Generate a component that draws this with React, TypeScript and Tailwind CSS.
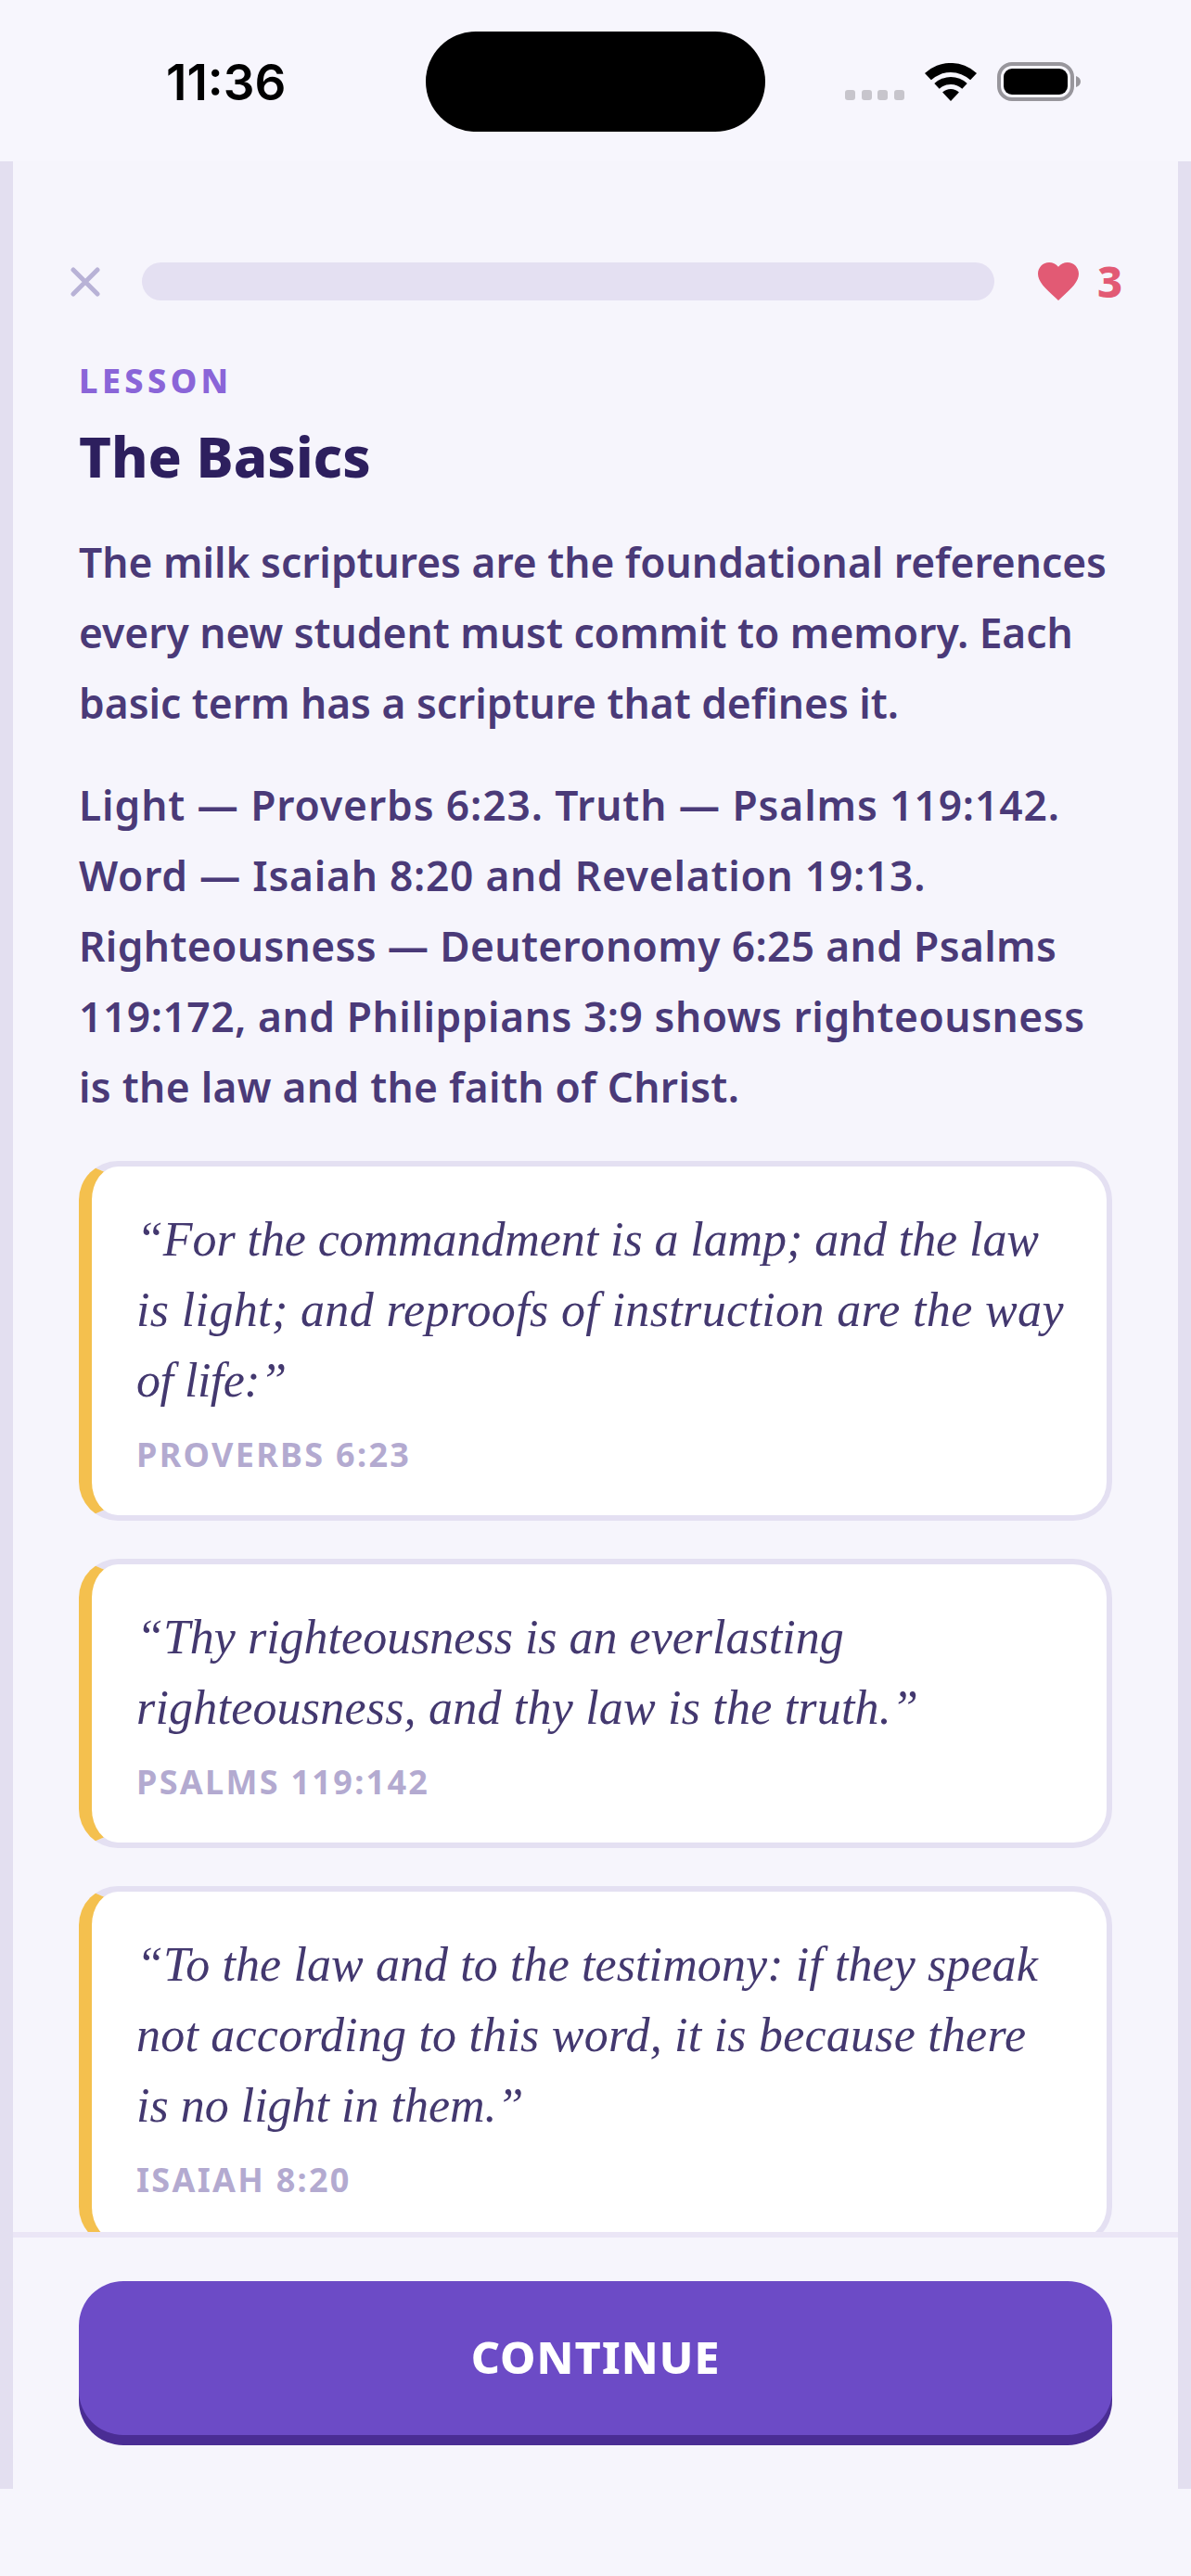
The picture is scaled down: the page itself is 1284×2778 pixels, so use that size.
const sans = "font-['Noto_Sans',sans-serif]";

function Card({ lines, source }: { lines: { text: string; fit: string }[]; source: string }) {
  return (
    <div className="shrink-0 rounded-[42px] border-[6px] border-l-[14px] border-[#e4e0f2] border-l-[#f4c04e] bg-white pl-[48px] pr-[20px] pt-[41px] pb-[41px]">
      <p className="font-['Liberation_Serif',serif] text-[52px] italic leading-[76px] text-[#43386f] whitespace-nowrap">
        {lines.map((l) => (
          <span key={l.text} className={`block ${l.fit}`}>{l.text}</span>
        ))}
      </p>
      <p className={`${sans} mt-[17px] text-[36px] font-bold leading-[49px] tracking-[2.3px] text-[#b3aad0]`}>{source}</p>
    </div>
  );
}

export default function App() {
  return (
    <div className="flex h-[2778px] w-[1284px] flex-col overflow-hidden bg-[#f6f5fc]">
      <div className="relative flex h-[174px] shrink-0 items-start bg-[#f7f6fd]">
        <span className="ml-[179px] mt-[60px] w-[280px] font-['Inter',sans-serif] text-[53px] font-semibold leading-[58px] text-black">11:36</span>
        <div className="mt-[34px] h-[108px] w-[366px] rounded-[54px] bg-black" />
        <div className="ml-[86px] mt-[67px] flex items-end">
          <div className="mb-px flex gap-[6.5px]">
            <span className="h-[11px] w-[11px] rounded-[3px] bg-[#c7c5cc]" />
            <span className="h-[11px] w-[11px] rounded-[3px] bg-[#c7c5cc]" />
            <span className="h-[11px] w-[11px] rounded-[3px] bg-[#c7c5cc]" />
            <span className="h-[11px] w-[11px] rounded-[3px] bg-[#c7c5cc]" />
          </div>
          <svg className="ml-[22px]" width="56" height="41" viewBox="0 0 56 41">
            <path d="M0 11A41 41 0 0 1 56 11L49.1 18.3A31 31 0 0 0 6.9 18.3Z" fill="#000" />
            <path d="M10.3 22A26 26 0 0 1 45.7 22L40.3 27.8A18 18 0 0 0 15.7 27.8Z" fill="#000" />
            <path d="M19.1 31.5A13 13 0 0 1 36.9 31.5L28 41Z" fill="#000" />
          </svg>
          <svg className="ml-[22px]" width="90" height="42" viewBox="0 0 90 42">
            <rect x="2" y="2" width="79" height="38" rx="14" fill="none" stroke="#98969c" strokeWidth="4" />
            <rect x="7" y="7" width="69" height="28" rx="9" fill="#000" />
            <path d="M85 15C88 16 90 18 90 21C90 24 88 26 85 27Z" fill="#98969c" />
          </svg>
        </div>
      </div>

      <div className="flex min-h-0 flex-1 flex-col border-x-[14px] border-[#e3dff0] bg-[#f6f5fc]">
        <div className="flex min-h-0 flex-1 flex-col overflow-hidden px-[71px]">
          <div className="mt-[109px] flex h-[41px] shrink-0 items-center">
            <svg className="-ml-[9px] shrink-0" width="32" height="32" viewBox="0 0 32 32">
              <path d="M3 3L29 29M29 3L3 29" stroke="#b8b2d6" strokeWidth="5" strokeLinecap="round" />
            </svg>
            <div className="ml-[45px] h-[41px] w-[919px] shrink-0 rounded-full bg-[#e4e0f2]" />
            <svg className="ml-[47px] shrink-0" width="44" height="41" viewBox="2 3 20 18.35" preserveAspectRatio="none">
              <path d="M12 21.35l-1.45-1.32C5.4 15.36 2 12.28 2 8.5 2 5.42 4.42 3 7.5 3c1.74 0 3.41.81 4.5 2.09C13.09 3.81 14.76 3 16.5 3 19.58 3 22 5.42 22 8.5c0 3.78-3.4 6.86-8.55 11.54L12 21.35z" fill="#e25a74" />
            </svg>
            <span className={`${sans} ml-[20px] shrink-0 text-[47px] font-extrabold leading-[41px] text-[#e25a74]`}>3</span>
          </div>

          <p className={`${sans} mt-[65px] text-[36px] font-extrabold leading-[44px] tracking-[4.4px] text-[#8a65d8]`}>LESSON</p>
          <h1 className={`${sans} mt-[23px] text-[60px] font-extrabold leading-[72px] text-[#2d1f5e]`}>The Basics</h1>

          <div className={`${sans} mt-[40px] whitespace-nowrap text-[44.3px] font-semibold leading-[76px] text-[#4a3a78]`}>
            <span className="block">The milk scriptures are the foundational references</span>
            <span className="block">every new student must commit to memory. Each</span>
            <span className="block">basic term has a scripture that defines it.</span>
          </div>
          <div className={`${sans} mt-[34px] whitespace-nowrap text-[44.3px] font-semibold leading-[76px] text-[#4a3a78]`}>
            <span className="block tracking-[0.9px]">Light — Proverbs 6:23. Truth — Psalms 119:142.</span>
            <span className="block tracking-[0.75px]">Word — Isaiah 8:20 and Revelation 19:13.</span>
            <span className="block tracking-[0.36px]">Righteousness — Deuteronomy 6:25 and Psalms</span>
            <span className="block tracking-[0.55px]">119:172, and Philippians 3:9 shows righteousness</span>
            <span className="block tracking-[0.3px]">is the law and the faith of Christ.</span>
          </div>

          <div className="mt-[42px] flex flex-col gap-[41px]">
            <Card
              lines={[
                { text: "“For the commandment is a lamp; and the law", fit: "tracking-[-0.08px]" },
                { text: "is light; and reproofs of instruction are the way", fit: "tracking-[0.36px]" },
                { text: "of life:”", fit: "tracking-[-0.5px]" },
              ]}
              source="PROVERBS 6:23"
            />
            <Card
              lines={[
                { text: "“Thy righteousness is an everlasting", fit: "tracking-normal" },
                { text: "righteousness, and thy law is the truth.”", fit: "tracking-[0.2px]" },
              ]}
              source="PSALMS 119:142"
            />
            <Card
              lines={[
                { text: "“To the law and to the testimony: if they speak", fit: "tracking-[0.1px]" },
                { text: "not according to this word, it is because there", fit: "tracking-[0.22px]" },
                { text: "is no light in them.”", fit: "tracking-normal" },
              ]}
              source="ISAIAH 8:20"
            />
          </div>
        </div>

        <div className="shrink-0 border-t-[6px] border-[#ebe6f6] bg-[#f6f5fc] px-[71px] pt-[47px] pb-[58px]">
          <button className={`${sans} flex h-[166px] w-full items-center justify-center rounded-[48px] bg-[#6c4bc6] pb-[4px] text-[48.5px] font-extrabold tracking-[1px] text-white shadow-[0_11px_0_#4a2d94]`}>
            CONTINUE
          </button>
        </div>
      </div>

      <div className="h-[94px] shrink-0 bg-[#f6f5fc]" />
    </div>
  );
}
